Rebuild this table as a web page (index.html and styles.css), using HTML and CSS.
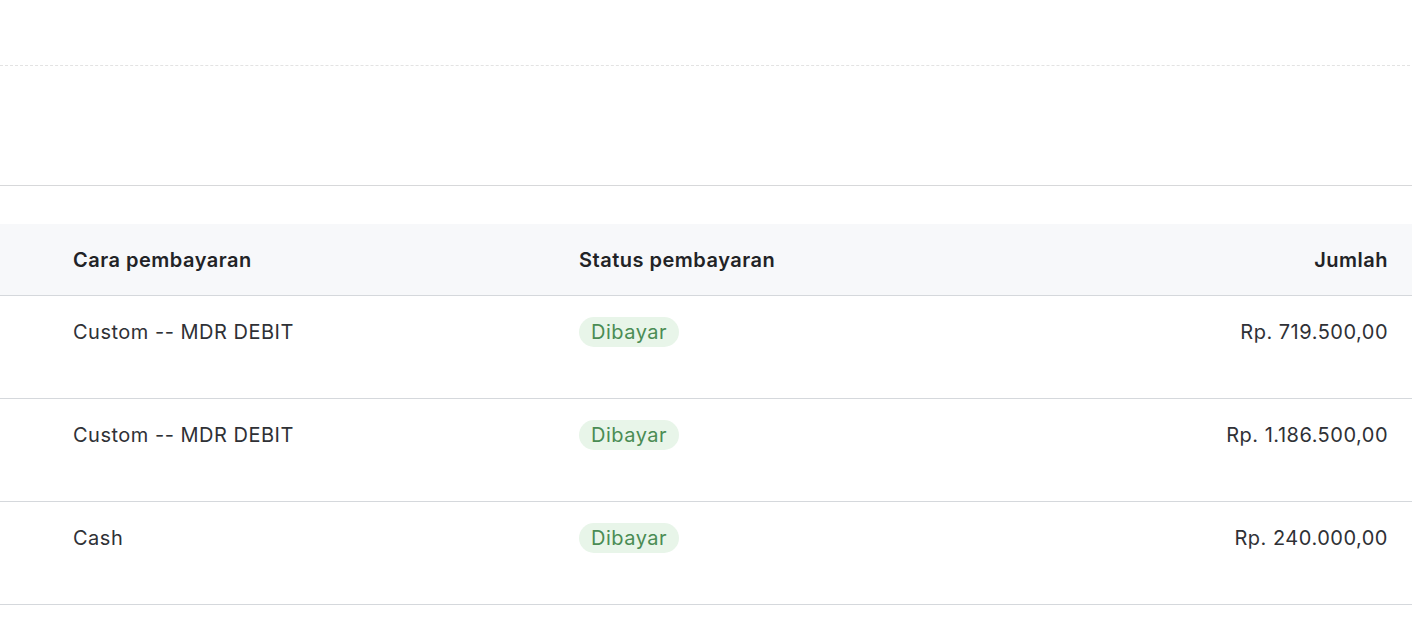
FILE: index.html
```html
<!DOCTYPE html>
<html lang="id">
<head>
<meta charset="utf-8">
<title>Pembayaran</title>
<link rel="stylesheet" href="styles.css">
</head>
<body>
<div class="page">
  <div class="top-space"></div>
  <div class="dashed"></div>
  <div class="gap1"></div>
  <div class="solid"></div>
  <div class="gap2"></div>
  <table class="pay-table">
    <thead>
      <tr>
        <th class="c1">Cara pembayaran</th>
        <th class="c2">Status pembayaran</th>
        <th class="c3">Jumlah</th>
      </tr>
    </thead>
    <tbody>
      <tr>
        <td class="c1">Custom -- MDR DEBIT</td>
        <td class="c2"><span class="badge">Dibayar</span></td>
        <td class="c3">Rp. 719.500,00</td>
      </tr>
      <tr>
        <td class="c1">Custom -- MDR DEBIT</td>
        <td class="c2"><span class="badge">Dibayar</span></td>
        <td class="c3">Rp. 1.186.500,00</td>
      </tr>
      <tr>
        <td class="c1">Cash</td>
        <td class="c2"><span class="badge">Dibayar</span></td>
        <td class="c3">Rp. 240.000,00</td>
      </tr>
    </tbody>
  </table>
</div>
</body>
</html>
```
FILE: styles.css
```css
html, body {
  margin: 0;
  padding: 0;
  background: #ffffff;
}
body {
  font-family: "Inter", "Noto Sans", sans-serif;
  color: #2b2d31;
}
.page {
  width: 1412px;
}
.top-space {
  height: 65px;
}
.dashed {
  border-top: 1px dashed #e3e3e3;
  margin-right: 2px;
}
.gap1 {
  height: 119px;
}
.solid {
  border-top: 1px solid #d7d8da;
}
.gap2 {
  height: 38px;
}
.pay-table {
  width: 100%;
  border-collapse: collapse;
  table-layout: fixed;
}
.pay-table th {
  background: #f7f8fa;
  height: 71px;
  padding: 0;
  font-size: 20px;
  letter-spacing: 0.5px;
  font-weight: 600;
  color: #222326;
  text-align: left;
  vertical-align: middle;
  border-bottom: 1px solid #d5d8dc;
}
.pay-table td {
  height: 103px;
  padding: 21px 0 0 0;
  box-sizing: border-box;
  font-size: 20px;
  letter-spacing: 0.5px;
  line-height: 30px;
  color: #2f3136;
  vertical-align: top;
  border-bottom: 1px solid #d5d8dc;
}
.pay-table .c1 {
  width: 506px;
  padding-left: 73px;
}
.pay-table .c2 {
  width: 400px;
}
.pay-table .c3 {
  text-align: right;
  padding-right: 24px;
}
.badge {
  display: inline-block;
  height: 30px;
  line-height: 30px;
  padding: 0 12px;
  border-radius: 15px;
  background: #e8f5e9;
  color: #4a8c54;
  font-size: 20px;
  letter-spacing: 0.5px;
}
```
